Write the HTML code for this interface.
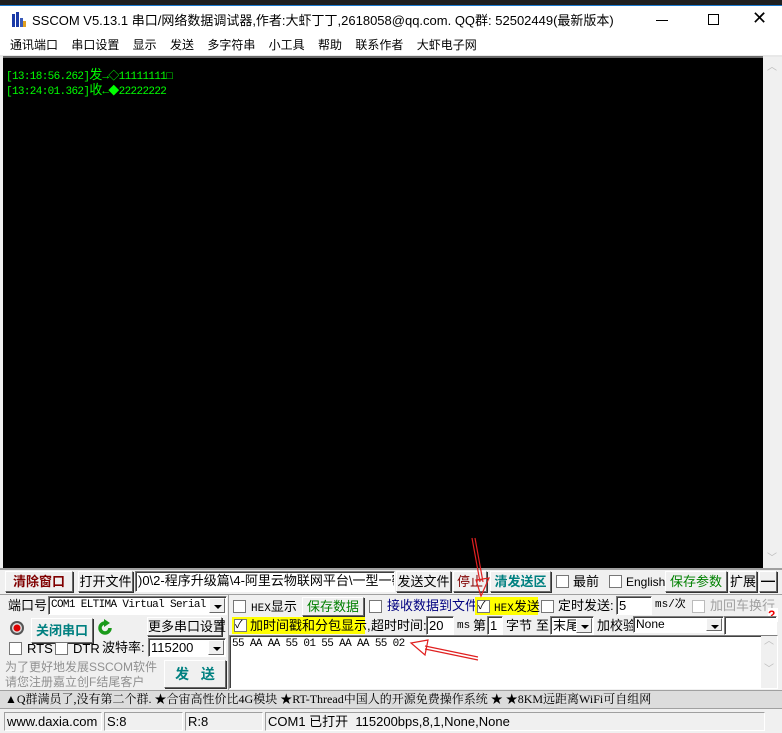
<!DOCTYPE html>
<html><head><meta charset="utf-8"><style>
*{box-sizing:border-box;margin:0;padding:0}
body{width:782px;height:733px;background:#f0f0f0;position:relative;overflow:hidden;font-family:"Liberation Sans","Noto Sans CJK SC",sans-serif;font-size:12px;color:#000}
.a{position:absolute;white-space:nowrap;line-height:15px}
.btn{position:absolute;background:#f0f0f0;border:1px solid;border-color:#fff #696969 #696969 #fff;box-shadow:1px 1px 0 #333;text-align:center;white-space:nowrap}
.cb{position:absolute;width:13px;height:13px;background:#fff;border:1px solid #777}
.inp{position:absolute;background:#fff;border:1px solid;border-color:#808080 #fff #fff #808080;box-shadow:inset 1px 1px 0 #404040;white-space:nowrap;overflow:hidden;padding-left:2px}
.dd{position:absolute;right:1px;top:1px;bottom:1px;width:16px;background:#f0f0f0;border:1px solid;border-color:#fff #696969 #696969 #fff}
.dd:after{content:"";position:absolute;left:4px;top:6px;border:4px solid transparent;border-top:4px solid #000}
.mono{font-family:"Liberation Mono","Noto Sans CJK SC",monospace}
.m11{font-size:11px;letter-spacing:-0.65px}
</style></head><body>
<div class="a" style="left:0;top:0;width:782px;height:5px;background:#202020"></div>
<div class="a" style="left:0;top:5px;width:782px;height:1px;background:#1a7ad0"></div>
<div class="a" style="left:0;top:6px;width:782px;height:49px;background:#fff"></div>
<svg class="a" style="left:11px;top:12px" width="16" height="16"><rect x="1" y="2" width="3" height="13" fill="#1a3aa8"/><rect x="5" y="0" width="3" height="15" fill="#1a3aa8"/><rect x="9" y="6" width="3" height="9" fill="#3a5ab8"/><rect x="12" y="9" width="3" height="6" fill="#e0a020"/></svg>
<div class="a" style="left:32px;top:13px;font-size:13px">SSCOM V5.13.1 串口/网络数据调试器,作者:大虾丁丁,2618058@qq.com. QQ群: 52502449(最新版本)</div>
<div class="a" style="left:656px;top:20px;width:12px;height:1px;background:#000"></div>
<div class="a" style="left:708px;top:14px;width:11px;height:11px;border:1px solid #000"></div>
<div class="a" style="left:752px;top:11px;font-size:18px;font-weight:100">✕</div>
<div class="a" style="left:10px;top:38px;font-size:12px">通讯端口&nbsp;&nbsp;&nbsp;&nbsp;串口设置&nbsp;&nbsp;&nbsp;&nbsp;显示&nbsp;&nbsp;&nbsp;&nbsp;发送&nbsp;&nbsp;&nbsp;&nbsp;多字符串&nbsp;&nbsp;&nbsp;&nbsp;小工具&nbsp;&nbsp;&nbsp;&nbsp;帮助&nbsp;&nbsp;&nbsp;&nbsp;联系作者&nbsp;&nbsp;&nbsp;&nbsp;大虾电子网</div>
<div class="a" style="left:0;top:55px;width:782px;height:2px;background:#e8e8e8"></div>
<div class="a" style="left:3px;top:56px;width:760px;height:2px;background:#696969"></div>
<div class="a" style="left:3px;top:58px;width:760px;height:510px;background:#000"></div>
<div class="a" style="left:763px;top:58px;width:17px;height:510px;background:#f0f0f0"></div>
<div class="a" style="left:767px;top:60px;color:#bbb;font-size:10px">︿</div>
<div class="a" style="left:767px;top:551px;color:#bbb;font-size:10px">﹀</div>
<div class="a mono m11" style="left:6px;top:69px;color:#00ff00;line-height:13px">[13:18:56.262]<span style="font-size:13px;letter-spacing:0">发</span>→◇11111111□<br>[13:24:01.362]<span style="font-size:13px;letter-spacing:0">收</span>←◆22222222</div>
<div class="a" style="left:0;top:568px;width:782px;height:2px;background:#a0a0a0"></div>
<!-- row1 -->
<div class="btn" style="left:5px;top:571px;width:68px;height:21px;line-height:19px;color:#800000;font-weight:bold;font-size:13px">清除窗口</div>
<div class="btn" style="left:78px;top:571px;width:55px;height:21px;line-height:19px;font-size:13px">打开文件</div>
<div class="inp" style="left:135px;top:571px;width:260px;height:21px;line-height:18px;font-size:13px">)0\2-程序升级篇\4-阿里云物联网平台\一型一密</div>
<div class="btn" style="left:396px;top:571px;width:55px;height:21px;line-height:19px;font-size:13px">发送文件</div>
<div class="btn" style="left:453px;top:571px;width:34px;height:21px;line-height:19px;font-size:13px;color:#800000">停止</div>
<div class="btn" style="left:490px;top:571px;width:61px;height:21px;line-height:19px;font-size:13px;font-weight:bold;color:#008080">清发送区</div>
<div class="cb" style="left:556px;top:575px"></div><div class="a" style="left:573px;top:574px;font-size:13px">最前</div>
<div class="cb" style="left:609px;top:575px"></div><div class="a" style="left:626px;top:575px;font-size:12px">English</div>
<div class="btn" style="left:665px;top:571px;width:62px;height:21px;line-height:19px;font-size:13px;color:#008000">保存参数</div>
<div class="btn" style="left:729px;top:571px;width:28px;height:21px;line-height:19px;font-size:13px">扩展</div>
<div class="btn" style="left:759px;top:571px;width:18px;height:21px;line-height:17px;font-size:14px;font-weight:bold">—</div>
<div class="a" style="left:0;top:594px;width:782px;height:1px;background:#a0a0a0"></div>
<!-- left panel -->
<div class="a" style="left:8px;top:598px;font-size:13px">端口号</div>
<div class="inp mono m11" style="left:48px;top:596px;width:179px;height:19px;line-height:16px">COM1 ELTIMA Virtual Serial<div class="dd"></div></div>
<svg class="a" style="left:9px;top:620px" width="16" height="16"><circle cx="8" cy="8" r="7" fill="#555"/><circle cx="8" cy="8" r="5" fill="#ddd"/><circle cx="8" cy="8" r="3.5" fill="#d00"/></svg>
<div class="btn" style="left:31px;top:618px;width:62px;height:25px;line-height:23px;font-size:13px;font-weight:bold;color:#008080">关闭串口</div>
<svg class="a" style="left:98px;top:619px" width="16" height="19"><path d="M12 9 A5 5 0 1 1 7 4" stroke="#1a9a1a" stroke-width="3.5" fill="none"/><path d="M6 0 L12 4 L6 8 Z" fill="#1a9a1a"/></svg>
<div class="btn" style="left:147px;top:617px;width:75px;height:19px;line-height:17px;font-size:13px">更多串口设置</div>
<div class="cb" style="left:9px;top:642px"></div><div class="a" style="left:27px;top:641px;font-size:13px">RTS</div>
<div class="cb" style="left:55px;top:642px"></div><div class="a" style="left:73px;top:641px;font-size:13px">DTR</div>
<div class="a" style="left:102px;top:640px;font-size:13px">波特率:</div>
<div class="inp" style="left:148px;top:638px;width:78px;height:19px;line-height:17px;font-size:13px">115200<div class="dd"></div></div>
<div class="a" style="left:5px;top:660px;font-size:12px;line-height:15px;color:#909090">为了更好地发展SSCOM软件<br>请您注册嘉立创F结尾客户</div>
<div class="btn" style="left:164px;top:660px;width:62px;height:28px;line-height:26px;font-size:14px;font-weight:bold;color:#008080">发&nbsp;&nbsp;&nbsp;送</div>
<div class="a" style="left:228px;top:595px;width:1px;height:95px;background:#a0a0a0"></div>
<!-- right panel -->
<div class="cb" style="left:233px;top:600px"></div><div class="a mono" style="left:251px;top:599px;font-size:11px">HEX<span style="font-size:13px;font-family:'Liberation Sans','Noto Sans CJK SC',sans-serif">显示</span></div>
<div class="btn" style="left:302px;top:597px;width:62px;height:19px;line-height:17px;font-size:13px;color:#008000">保存数据</div>
<div class="cb" style="left:369px;top:600px"></div><div class="a" style="left:387px;top:598px;font-size:13px;color:#000080">接收数据到文件</div>
<div class="a" style="left:475px;top:597px;width:63px;height:18px;background:#ffff00"></div>
<div class="cb" style="left:477px;top:600px;font-size:11px;line-height:10px">✓</div><div class="a mono" style="left:494px;top:599px;font-size:11px">HEX<span style="font-size:13px;font-family:'Liberation Sans','Noto Sans CJK SC',sans-serif">发送</span></div>
<div class="cb" style="left:541px;top:600px"></div><div class="a" style="left:558px;top:598px;font-size:13px">定时发送:</div>
<div class="inp" style="left:616px;top:596px;width:36px;height:19px;line-height:17px;font-size:13px">5</div>
<div class="a mono" style="left:655px;top:598px;font-size:11px">ms/次</div>
<div class="cb" style="left:692px;top:600px;border-color:#bbb"></div><div class="a" style="left:710px;top:598px;font-size:13px;color:#a0a0a0">加回车换行</div>
<div class="a" style="left:768px;top:608px;width:10px;height:14px;background:#fff;color:#e00;font-weight:bold;font-size:12px;line-height:14px">?</div>
<div class="a" style="left:232px;top:617px;width:133px;height:17px;background:#ffff00"></div>
<div class="cb" style="left:234px;top:619px;font-size:11px;line-height:10px">✓</div><div class="a" style="left:250px;top:618px;font-size:13px">加时间戳和分包显示,</div>
<div class="a" style="left:371px;top:618px;font-size:13px">超时时间:</div>
<div class="inp" style="left:426px;top:616px;width:28px;height:19px;line-height:17px;font-size:13px">20</div>
<div class="a mono" style="left:457px;top:619px;font-size:11px">ms</div>
<div class="a" style="left:473px;top:618px;font-size:13px">第</div>
<div class="inp" style="left:487px;top:616px;width:16px;height:19px;line-height:17px;font-size:13px">1</div>
<div class="a" style="left:506px;top:618px;font-size:13px">字节</div>
<div class="a" style="left:536px;top:618px;font-size:13px">至</div>
<div class="inp" style="left:550px;top:616px;width:44px;height:19px;line-height:17px;font-size:13px">末尾<div class="dd"></div></div>
<div class="a" style="left:597px;top:618px;font-size:13px">加校验</div>
<div class="inp" style="left:633px;top:616px;width:91px;height:17px;line-height:15px;font-size:12px">None<div class="dd"></div></div>
<div class="inp" style="left:724px;top:616px;width:53px;height:19px"></div>
<div class="inp mono m11" style="left:229px;top:635px;width:549px;height:54px;line-height:16px;padding-left:2px">55 AA AA 55 01 55 AA AA 55 02
<div class="a" style="right:0;top:0;bottom:0;width:16px;background:#f0f0f0;color:#bbb;font-size:10px;text-align:center;line-height:14px;letter-spacing:0">︿<br><br>﹀</div></div>
<!-- ticker -->
<div class="a" style="left:0;top:690px;width:782px;height:19px;background:#dcdcdc;border-top:1px solid #a0a0a0;border-bottom:1px solid #a0a0a0"></div>
<div class="a" style="left:5px;top:692px;font-size:12px;font-family:'Liberation Serif','Noto Serif CJK SC',serif">▲Q群满员了,没有第二个群. ★合宙高性价比4G模块 ★RT-Thread中国人的开源免费操作系统 ★ ★8KM远距离WiFi可自组网</div>
<!-- status -->
<div class="a" style="left:0;top:710px;width:782px;height:23px;background:#f0f0f0"></div>
<div class="a" style="left:4px;top:712px;width:98px;height:19px;border:1px solid;border-color:#a0a0a0 #fff #fff #a0a0a0;font-size:13px;line-height:17px;padding-left:2px">www.daxia.com</div>
<div class="a" style="left:104px;top:712px;width:79px;height:19px;border:1px solid;border-color:#a0a0a0 #fff #fff #a0a0a0;font-size:13px;line-height:17px;padding-left:2px">S:8</div>
<div class="a" style="left:185px;top:712px;width:78px;height:19px;border:1px solid;border-color:#a0a0a0 #fff #fff #a0a0a0;font-size:13px;line-height:17px;padding-left:2px">R:8</div>
<div class="a" style="left:265px;top:712px;width:500px;height:19px;border:1px solid;border-color:#a0a0a0 #fff #fff #a0a0a0;font-size:13px;line-height:17px;padding-left:2px">COM1 已打开&nbsp;&nbsp;115200bps,8,1,None,None</div>
<!-- arrows -->
<svg class="a" style="left:0;top:0" width="782" height="733">
<g stroke="#e02020" stroke-width="1.2" fill="none">
<path d="M472 538 L480 582 M475 538 L483 582 M476 580 L481 596 L489 578 Z"/>
<path d="M478 657 L425 646 M478 660 L425 649 M428 640 L411 643 L425 655 Z"/>
</g></svg>
</body></html>
